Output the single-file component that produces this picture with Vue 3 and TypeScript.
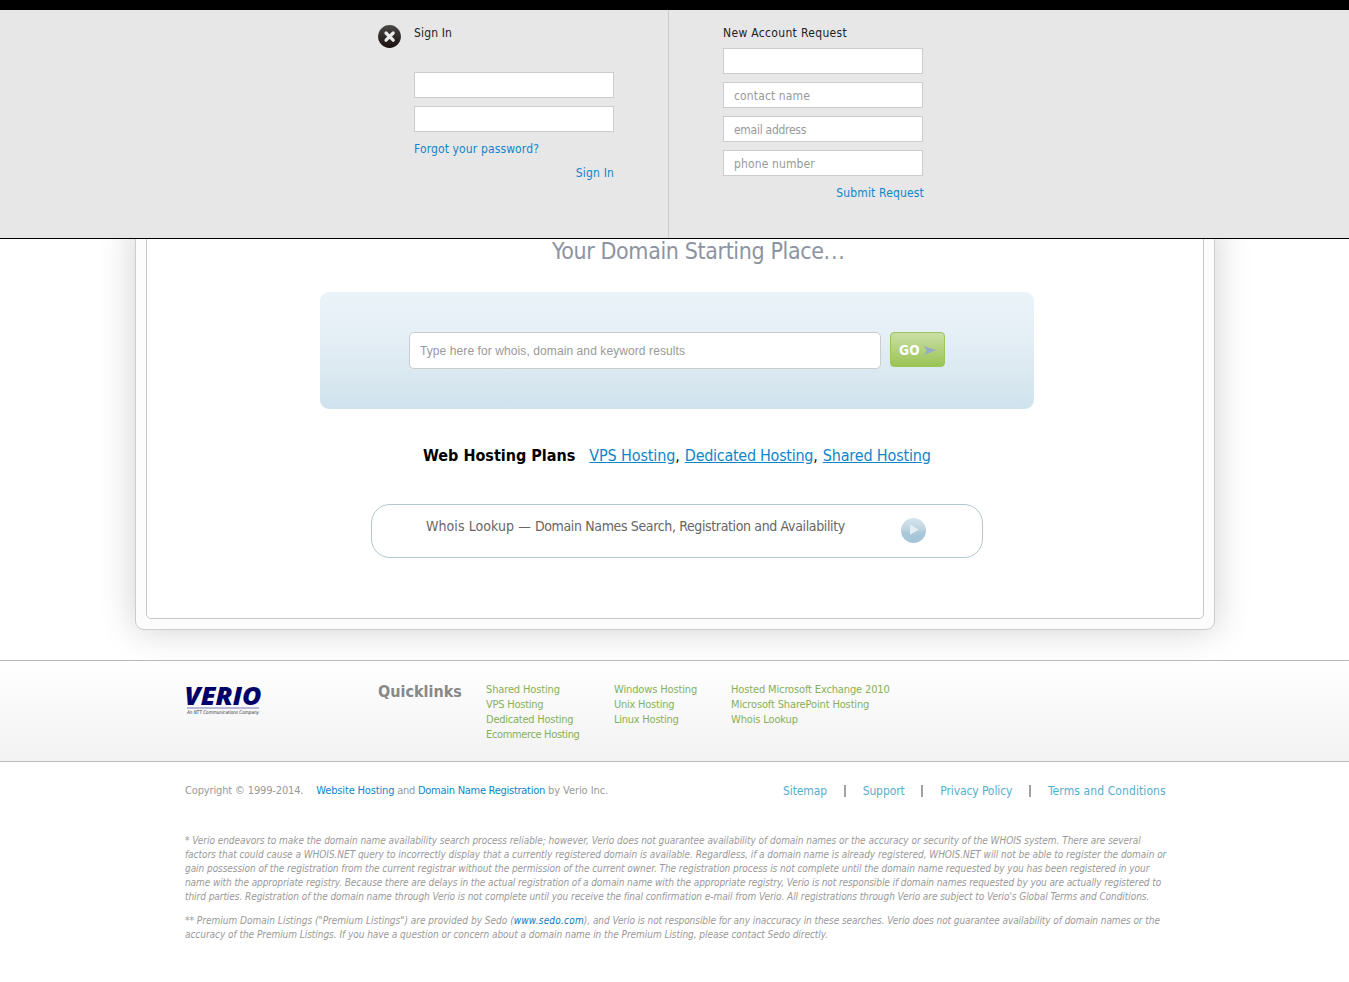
<script setup lang="ts">
import { ref } from 'vue'

interface Field { name: string; type: string; placeholder: string }

const loginFields: Field[] = [
  { name: 'username', type: 'text', placeholder: '' },
  { name: 'password', type: 'password', placeholder: '' },
]
const requestFields: Field[] = [
  { name: 'company', type: 'text', placeholder: '' },
  { name: 'contact', type: 'text', placeholder: 'contact name' },
  { name: 'email', type: 'text', placeholder: 'email address' },
  { name: 'phone', type: 'text', placeholder: 'phone number' },
]
const query = ref('')

const quicklinks: { cls: string; links: { text: string; cls: string }[] }[] = [
  { cls: 'col-a', links: [
    { text: 'Shared Hosting', cls: 't1' }, { text: 'VPS Hosting', cls: 't2' },
    { text: 'Dedicated Hosting', cls: 't2' }, { text: 'Ecommerce Hosting', cls: 't3' },
  ] },
  { cls: 'col-b', links: [
    { text: 'Windows Hosting', cls: 't1' }, { text: 'Unix Hosting', cls: 't2' }, { text: 'Linux Hosting', cls: 't2' },
  ] },
  { cls: 'col-c', links: [
    { text: 'Hosted Microsoft Exchange 2010', cls: 't1' }, { text: 'Microsoft SharePoint Hosting', cls: 't1' }, { text: 'Whois Lookup', cls: 't1' },
  ] },
]
</script>

<template>
  <div class="page">
    <header class="account">
      <section class="signin">
        <svg class="close" width="23" height="23" viewBox="0 0 23 23">
          <defs>
            <linearGradient id="closeFill" x1="0" y1="0" x2="0" y2="1">
              <stop offset="0" stop-color="#4a4848" /><stop offset="1" stop-color="#1a0f0e" />
            </linearGradient>
          </defs>
          <circle cx="11.5" cy="11.5" r="11.4" fill="url(#closeFill)" />
          <path d="M8 8l7.2 7.2M15.2 8L8 15.2" stroke="#ececec" stroke-width="3.2" stroke-linecap="round" />
        </svg>
        <form class="form" @submit.prevent>
          <h2 class="signin-title">Sign In</h2>
          <input v-for="f in loginFields" :key="f.name" class="field" :type="f.type" :name="f.name">
          <a class="link forgot">Forgot your password?</a>
          <a class="link submit signin-submit">Sign In</a>
        </form>
      </section>
      <section class="request">
        <form class="form" @submit.prevent>
          <h2 class="request-title">New Account Request</h2>
          <input v-for="f in requestFields" :key="f.name" class="field" :class="f.name" :type="f.type" :name="f.name" :placeholder="f.placeholder">
          <a class="link submit request-submit">Submit Request</a>
        </form>
      </section>
    </header>

    <main class="stage">
      <div class="card">
        <div class="card-inner">
          <h1 class="tagline">Your Domain Starting Place<span class="dots">...</span></h1>
          <form class="search" @submit.prevent>
            <input v-model="query" class="search-input" type="text" placeholder="Type here for whois, domain and keyword results">
            <button class="go" type="submit">
              <span>GO</span>
              <svg width="12" height="9" viewBox="0 0 12 9"><path d="M0 0L12 4.3L0 9L2.8 4.5Z" fill="#94abc9" /></svg>
            </button>
          </form>
          <p class="plans">
            <b>Web Hosting Plans</b>
            <span><a class="p1">VPS Hosting</a>,</span>
            <span><a class="p2">Dedicated Hosting</a>,</span>
            <a class="p3">Shared Hosting</a>
          </p>
          <div class="whois">
            <p><span class="w1">Whois Lookup — </span>Domain Names Search, Registration and Availability</p>
            <svg class="play" width="25" height="25" viewBox="0 0 25 25">
              <defs>
                <linearGradient id="playFill" x1="0" y1="0" x2="0" y2="1">
                  <stop offset="0" stop-color="#d5e4ec" /><stop offset=".45" stop-color="#bdd4e0" /><stop offset=".6" stop-color="#a9c8d9" /><stop offset="1" stop-color="#a3c4d7" />
                </linearGradient>
              </defs>
              <circle cx="12.5" cy="12.5" r="12.5" fill="url(#playFill)" />
              <path d="M9 6.5L17.8 11.7L9 16.8Z" fill="#e4eef5" />
            </svg>
          </div>
        </div>
      </div>
    </main>

    <section class="quick">
      <svg class="logo" width="78" height="32" viewBox="0 0 78 32">
        <text class="logo-name" x="-.5" y="18.5" textLength="77" lengthAdjust="spacingAndGlyphs">VERIO</text>
        <rect x="2" y="21" width="72" height="2" fill="#b9b9da" />
        <text class="logo-sub" x="2" y="28.3" textLength="72" lengthAdjust="spacingAndGlyphs">An NTT Communications Company</text>
      </svg>
      <h3>Quicklinks</h3>
      <ul v-for="col in quicklinks" :key="col.cls" :class="col.cls">
        <li v-for="l in col.links" :key="l.text"><a :class="l.cls">{{ l.text }}</a></li>
      </ul>
    </section>

    <footer class="foot">
      <div class="legal">
        <p class="copy">
          <span class="c1">Copyright © 1999-2014.</span>
          <a class="c2">Website Hosting</a><span class="c4"> and </span><a class="c3">Domain Name Registration</a><span class="c5"> by Verio Inc.</span>
        </p>
        <nav class="nav">
          <a>Sitemap</a><i class="bar"></i><a>Support</a><i class="bar"></i><a>Privacy Policy</a><i class="bar"></i><a class="terms">Terms and Conditions</a>
        </nav>
      </div>
      <p class="note">
        <span class="n1">* Verio endeavors to make the domain name availability search process reliable; however, Verio does not guarantee availability of domain names or the accuracy or security of the WHOIS system. There are several</span>
        <span class="n1">factors that could cause a WHOIS.NET query to incorrectly display that a currently registered domain is available. Regardless, if a domain name is already registered, WHOIS.NET will not be able to register the domain or</span>
        <span class="n2">gain possession of the registration from the current registrar without the permission of the current owner. The registration process is not complete until the domain name requested by you has been registered in your</span>
        <span class="n3">name with the appropriate registry. Because there are delays in the actual registration of a domain name with the appropriate registry, Verio is not responsible if domain names requested by you are actually registered to</span>
        <span class="n2">third parties. Registration of the domain name through Verio is not complete until you receive the final confirmation e-mail from Verio. All registrations through Verio are subject to Verio's Global Terms and Conditions.</span>
      </p>
      <p class="note">
        <span><span class="n0">** Premium Domain Listings ("Premium Listings") are provided by Sedo (</span><a class="sedo">www.sedo.com</a><span class="n4">), and Verio is not responsible for any inaccuracy in these searches. Verio does not guarantee availability of domain names or the</span></span>
        <span class="n1">accuracy of the Premium Listings. If you have a question or concern about a domain name in the Premium Listing, please contact Sedo directly.</span>
      </p>
    </footer>
  </div>
</template>

<style>
body { margin: 0; background: #fff; }
</style>

<style scoped>
.page { height: 982px; overflow: hidden; font-family: "DejaVu Sans Condensed", Tahoma, "DejaVu Sans", sans-serif; font-size: 12px; color: #999; }
h1, h2, h3, p, ul { margin: 0; padding: 0; font-weight: normal; }
ul { list-style: none; }

.account { position: relative; z-index: 1; display: flex; box-sizing: border-box; height: 239px; background: #e7e7e7; border-top: 10px solid #000; border-bottom: 1px solid #000; }
.signin { box-sizing: border-box; width: 669px; padding: 15px 0 0 378px; display: flex; gap: 13px; border-right: 1px solid #ccc; }
.close { flex: none; }
.request { padding: 15px 0 0 54px; }
.form { width: 200px; display: flex; flex-direction: column; }
h2 { font-size: 12px; line-height: 16px; color: #222; }
.signin-title { margin-bottom: 31px; letter-spacing: .14px; }
.request-title { margin-bottom: 7px; letter-spacing: .33px; white-space: nowrap; }
.field { box-sizing: border-box; width: 200px; height: 26px; margin: 0 0 8px; padding: 1px 10px 0; border: 1px solid #ccc; border-radius: 0; background: #fff; font: inherit; letter-spacing: .13px; outline: none; }
.field.email { letter-spacing: -.277px; }
.field::placeholder, .search-input::placeholder { color: #999; opacity: 1; }
.link { color: #0e86ca; line-height: 16px; }
.forgot { margin-top: 1px; letter-spacing: .124px; }
.submit { align-self: flex-end; letter-spacing: .16px; white-space: nowrap; }
.signin-submit { margin-top: 8px; }
.request-submit { margin: 1px -1px 0 0; }

.stage { height: 421px; overflow: hidden; }
.card { box-sizing: border-box; width: 1080px; height: 411px; margin: -20px 0 0 135px; padding: 10px; border: 1px solid #ccc; border-radius: 9px; background: #fcfcfc; box-shadow: 0 0 36px rgba(0, 0, 0, .19); }
.card-inner { box-sizing: border-box; height: 389px; border: 1px solid #c8c8c8; border-radius: 5px; background: #fff; padding-top: 5px; }
.tagline { margin-left: 405px; font-size: 23px; line-height: 30px; letter-spacing: -.38px; color: #8d93a1; }
.dots { letter-spacing: .8px; }
.search { box-sizing: border-box; width: 714px; height: 117px; margin: 26px 0 0 173px; padding: 40px 0 0 89px; display: flex; align-items: flex-start; gap: 9px; border-radius: 9px; background: linear-gradient(#eaf3f8, #e7f0f7 30%, #dbe9f1 68%, #cfe3ee); }
.search-input { box-sizing: border-box; width: 472px; height: 37px; margin: 0; padding: 0 10px; border: 1px solid #ccc; border-radius: 5px; font: 12px "Liberation Sans", Arial, sans-serif; letter-spacing: .09px; outline: none; }
.go { box-sizing: border-box; width: 55px; height: 35px; margin: 0; padding: 0 0 0 8px; display: flex; align-items: center; gap: 4.5px; border: 1px solid #9cc55a; border-radius: 4px; background: linear-gradient(#cbdfa6, #9ac455); color: #fff; font: bold 13.5px "DejaVu Sans Condensed", sans-serif; letter-spacing: .2px; }
.go svg { margin-top: 2px; }
.plans { margin: 37px 0 0 276px; display: flex; font-size: 16px; line-height: 20px; color: #000; white-space: nowrap; }
.plans b { margin-right: 14px; }
.plans span { margin-right: 5px; }
.plans a { color: #0e86ca; text-decoration: underline; }
.p1 { letter-spacing: -.12px; }
.p2 { letter-spacing: -.28px; }
.p3 { letter-spacing: -.16px; }
.whois { box-sizing: border-box; width: 612px; height: 54px; margin: 38px 0 0 224px; padding: 11px 0 0 54px; display: flex; border: 1px solid #b3c7d0; border-radius: 19px; font-size: 14px; line-height: 20px; letter-spacing: -.36px; color: #666; white-space: nowrap; }
.whois p { width: 475px; }
.w1 { letter-spacing: .07px; }
.play { margin-top: 2px; }

.quick { box-sizing: border-box; height: 102px; display: flex; padding: 21px 0 0 185px; border-top: 1px solid #bbb; border-bottom: 1px solid #bbb; background: linear-gradient(#fff, #f2f2f2); }
.logo { margin-top: 4px; width: 78px; flex: none; overflow: visible; }
.logo-name { font: italic 800 24.5px "Open Sans", "Noto Sans", sans-serif; fill: #000066; }
.logo-sub { font: italic 5px "DejaVu Sans Condensed", sans-serif; fill: #333; }
h3 { width: 108px; margin-left: 115px; font-size: 16px; line-height: 20px; font-weight: bold; color: #888; }
.quick ul { font-size: 11px; line-height: 15px; color: #86b05a; white-space: nowrap; }
.col-a { width: 128px; }
.col-b { width: 117px; }
.t1 { letter-spacing: -.14px; }
.t2 { letter-spacing: -.24px; }
.t3 { letter-spacing: -.35px; }

.foot { padding: 21px 0 0 185px; }
.legal { display: flex; height: 51px; }
.copy { width: 598px; font-size: 11px; line-height: 15px; white-space: nowrap; }
.copy a { color: #0e86ca; }
.c1 { letter-spacing: -.15px; margin-right: 13px; }
.c2 { letter-spacing: -.158px; }
.c3 { letter-spacing: -.271px; }
.c4 { letter-spacing: -.25px; }
.c5 { letter-spacing: -.08px; }
.nav { display: flex; line-height: 16px; white-space: nowrap; }
.nav a { color: #57aecb; letter-spacing: -.1px; }
.nav .terms { letter-spacing: .1px; }
.bar { width: 2px; height: 12px; margin: 2px 16.8px 0; background: #a2a2a2; }
.note { margin-bottom: 10px; font-size: 10px; line-height: 14px; font-style: italic; white-space: nowrap; }
.note > span { display: block; }
.n1 { letter-spacing: -.044px; }
.n2 { letter-spacing: -.06px; }
.n3 { letter-spacing: -.091px; }
.n4 { letter-spacing: -.067px; }
.sedo { color: #0e78c4; letter-spacing: .2px; }
</style>
